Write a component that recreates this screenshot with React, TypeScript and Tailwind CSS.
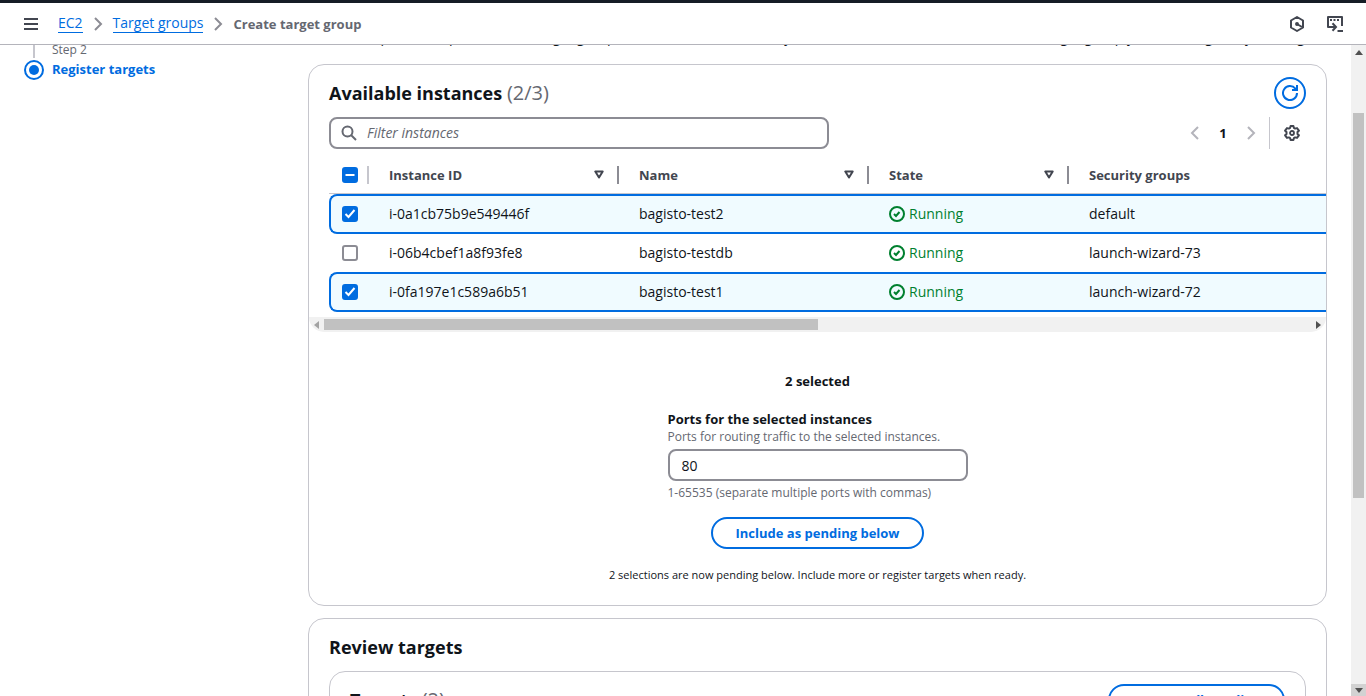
import { useEffect, useRef, type ReactNode } from "react";

type Instance = { id: string; name: string; state: string; group: string; selected: boolean };

const instances: Instance[] = [
  { id: "i-0a1cb75b9e549446f", name: "bagisto-test2", state: "Running", group: "default", selected: true },
  { id: "i-06b4cbef1a8f93fe8", name: "bagisto-testdb", state: "Running", group: "launch-wizard-73", selected: false },
  { id: "i-0fa197e1c589a6b51", name: "bagisto-test1", state: "Running", group: "launch-wizard-72", selected: true },
];

function Icon({ children, className = "" }: { children: ReactNode; className?: string }) {
  return (
    <svg viewBox="0 0 16 16" className={`size-4 shrink-0 ${className}`} fill="none" stroke="currentColor" strokeWidth="2" aria-hidden="true">
      {children}
    </svg>
  );
}

function Checkbox({ label, checked = false, indeterminate = false }: { label: string; checked?: boolean; indeterminate?: boolean }) {
  const ref = useRef<HTMLInputElement>(null);
  useEffect(() => {
    if (ref.current) ref.current.indeterminate = indeterminate;
  }, [indeterminate]);
  return (
    <span className="relative block size-4">
      <input
        ref={ref}
        type="checkbox"
        aria-label={label}
        defaultChecked={checked}
        className="peer block size-4 appearance-none rounded-[3px] border-2 border-[#8c8c94] bg-white checked:border-[#006ce0] checked:bg-[#006ce0] indeterminate:border-[#006ce0] indeterminate:bg-[#006ce0]"
      />
      <svg
        viewBox="0 0 16 16"
        className="pointer-events-none absolute inset-0 hidden size-4 peer-checked:block peer-indeterminate:block"
        fill="none"
        stroke="#fff"
        strokeWidth="2"
        aria-hidden="true"
      >
        {indeterminate ? <path d="M3.5 8h9" /> : <path d="m3.5 8 3 3 6-7" />}
      </svg>
    </span>
  );
}

function ColumnHeader({ title, sortable = true }: { title: string; sortable?: boolean }) {
  return (
    <th scope="col" className="border-b border-[#c6c6cd] p-0 text-left">
      <div className="flex h-[37px] items-center justify-between pl-5">
        <span className="text-[13px] leading-5 font-bold text-[#424650]">{title}</span>
        {sortable && (
          <button type="button" aria-label={`Sort by ${title}`} className="flex items-center gap-[13px] text-[#424650]">
            <svg viewBox="0 0 10 9" className="h-[9px] w-[10px]" fill="none" stroke="currentColor" strokeWidth="2" strokeLinejoin="round" aria-hidden="true">
              <path d="M1.3 1.5h7.4L5 7.500z" />
            </svg>
            <span className="h-[18px] w-[2px] bg-[#8c8c94]" />
          </button>
        )}
      </div>
    </th>
  );
}

function InstanceRow({ item }: { item: Instance }) {
  const cell = item.selected ? "border-y-2 border-[#006ce0] bg-[#f0fbff] h-10" : "h-[38px]";
  const first = item.selected ? "rounded-l-lg border-l-2 pl-[11px]" : "pl-[13px]";
  return (
    <tr className="text-[14px] leading-5 text-[#0f141a]">
      <td className={`py-0 ${cell} ${first}`}>
        <Checkbox label={`Select ${item.name}`} checked={item.selected} />
      </td>
      <td className={`py-0 pl-5 ${cell}`}>{item.id}</td>
      <td className={`py-0 pl-5 ${cell}`}>{item.name}</td>
      <td className={`py-0 pl-5 ${cell}`}>
        <span className="flex items-center gap-1 text-[#00802f]">
          <Icon>
            <circle cx="8" cy="8" r="7" />
            <path d="m5 8 2 2 3.5-4" />
          </Icon>
          {item.state}
        </span>
      </td>
      <td className={`py-0 pl-5 ${cell}`}>{item.group}</td>
    </tr>
  );
}

function TopBar() {
  return (
    <header className="shrink-0 border-t-3 border-b border-t-[#161d26] border-b-[#b4b4bb] bg-white">
      <div className="flex h-[41px] items-center justify-between pr-[22px] pl-6">
        <div className="flex items-center">
          <button type="button" aria-label="Open navigation" className="text-[#424650]">
            <svg viewBox="0 0 14 12" className="h-3 w-[14px]" fill="none" stroke="currentColor" strokeWidth="2" aria-hidden="true">
              <path d="M0 1h14M0 6h14M0 11h14" />
            </svg>
          </button>
          <nav aria-label="Breadcrumbs" className="ml-5 text-[14px] leading-5">
            <ol className="flex items-center gap-[7px]">
              <li className="flex items-center gap-[7px]">
                <a href="#ec2" className="border-b border-[#006ce0] leading-[18px] text-[#006ce0]">EC2</a>
                <Icon className="text-[#8c8c94]">
                  <path d="m5 2 6 6-6 6" />
                </Icon>
              </li>
              <li className="flex items-center gap-[7px]">
                <a href="#target-groups" className="border-b border-[#006ce0] leading-[18px] text-[#006ce0]">Target groups</a>
                <Icon className="text-[#8c8c94]">
                  <path d="m5 2 6 6-6 6" />
                </Icon>
              </li>
              <li className="text-[13px] font-bold text-[#656871]" aria-current="page">Create target group</li>
            </ol>
          </nav>
        </div>
        <div className="flex items-center gap-[21px] text-[#424650]">
          <button type="button" aria-label="Amazon Q">
            <Icon>
              <path d="M8 1 14 4.5v7L8 15l-6-3.500v-7z" strokeLinejoin="round" />
              <path d="m8 8 5 3" />
              <circle cx="8" cy="8" r="1.200" fill="currentColor" strokeWidth="1.500" />
            </Icon>
          </button>
          <button type="button" aria-label="CloudShell">
            <svg viewBox="0 0 18 16" className="h-4 w-[18px]" fill="none" stroke="currentColor" strokeWidth="2" aria-hidden="true">
              <path d="M4 11H2V1h14v9" strokeLinejoin="round" />
              <path d="M4 4h2M7.500 4h2M11 4h2" strokeWidth="1.800" />
              <path d="M4 11h5.500M6.500 7.300 10 11l-3.500 3.700" />
              <path d="M11.500 15H17" />
            </svg>
          </button>
        </div>
      </div>
    </header>
  );
}

function Steps() {
  return (
    <aside className="w-[308px] shrink-0 pl-6">
      <ol aria-label="Steps">
        <li className="flex gap-2">
          <div className="flex w-5 flex-col items-center">
            <span className="h-[13px] w-[2px] bg-[#c6c6cd]" />
            <svg viewBox="0 0 20 20" className="mt-[2px] size-5 shrink-0 text-[#006ce0]" aria-hidden="true">
              <circle cx="10" cy="10" r="9" fill="none" stroke="currentColor" strokeWidth="2" />
              <circle cx="10" cy="10" r="5" fill="currentColor" />
            </svg>
          </div>
          <div className="-mt-[3px]">
            <p className="text-[12px] leading-4 text-[#656871]">Step 2</p>
            <p className="mt-px text-[13px] leading-5 font-bold text-[#006ce0]">Register targets</p>
          </div>
        </li>
      </ol>
    </aside>
  );
}

function AvailableInstances() {
  return (
    <section className="overflow-hidden rounded-2xl border border-[#c6c6cd] bg-white">
      <div className="flex items-center justify-between px-5 pt-3">
        <h2 className="text-[18px] leading-6 font-bold text-[#0f141a]">
          Available instances <span className="text-[20px] font-normal text-[#656871]">(2/3)</span>
        </h2>
        <button type="button" aria-label="Refresh" className="flex size-8 items-center justify-center rounded-full border-2 border-[#006ce0] text-[#006ce0]">
          <Icon>
            <path d="M10 5h5V0" />
            <path d="M15 8a7 7 0 1 1-1.600-4.400L15 5" />
          </Icon>
        </button>
      </div>

      <div className="mt-2 flex items-center justify-between px-5">
        <label className="flex h-8 w-[500px] items-center gap-[10px] rounded-lg border-2 border-[#8c8c94] pl-[10px] text-[#656871]">
          <Icon>
            <circle cx="6.500" cy="6.500" r="5" />
            <path d="m10 10 5 5" />
          </Icon>
          <input
            type="search"
            aria-label="Filter instances"
            placeholder="Filter instances"
            className="min-w-0 flex-1 bg-transparent text-[14px] leading-5 outline-none placeholder:text-[#656871] placeholder:italic"
          />
        </label>
        <div className="flex items-center">
          <button type="button" aria-label="Previous page" className="text-[#b4b4bb]">
            <Icon>
              <path d="M11 2 5 8l6 6" />
            </Icon>
          </button>
          <button type="button" aria-label="Page 1" className="w-10 text-center text-[13px] leading-5 font-bold text-[#0f141a]">1</button>
          <button type="button" aria-label="Next page" className="text-[#b4b4bb]">
            <Icon>
              <path d="m5 2 6 6-6 6" />
            </Icon>
          </button>
          <span className="ml-[10px] h-8 w-px bg-[#c6c6cd]" />
          <button type="button" aria-label="Preferences" className="mr-[6px] ml-[14px] text-[#424650]">
            <Icon>
              <path
                d="M6.600 1h2.800l.5 1.900 1.200.7 1.900-.5 1.900 2.600L13.500 7v2l1.400 1.300-1.900 2.600-1.900-.5-1.200.7-.5 1.900H6.600l-.5-1.900-1.200-.7-1.900.5-1.900-2.600L2.500 9V7L1.100 5.700 3 3.100l1.900.5 1.200-.7z"
                strokeLinejoin="round"
                strokeWidth="2"
              />
              <circle cx="8" cy="8" r="2" strokeWidth="1.800" />
            </Icon>
          </button>
        </div>
      </div>

      <div className="mt-[7px] overflow-hidden pl-5">
        <table className="w-full table-fixed border-separate border-spacing-0">
          <colgroup>
            <col className="w-10" />
            <col className="w-[250px]" />
            <col className="w-[250px]" />
            <col className="w-[200px]" />
            <col />
          </colgroup>
          <thead>
            <tr>
              <th scope="col" className="border-b border-[#c6c6cd] p-0">
                <div className="flex h-[37px] items-center justify-between pl-[13px]">
                  <Checkbox label="Select all instances" indeterminate />
                  <span className="h-[18px] w-[2px] bg-[#c6c6cd]" />
                </div>
              </th>
              <ColumnHeader title="Instance ID" />
              <ColumnHeader title="Name" />
              <ColumnHeader title="State" />
              <ColumnHeader title="Security groups" sortable={false} />
            </tr>
          </thead>
          <tbody>
            {instances.map((item) => (
              <InstanceRow key={item.id} item={item} />
            ))}
          </tbody>
        </table>
      </div>

      <div className="mt-[5px] flex h-[15px] items-center justify-between rounded-b-2xl bg-[#f1f1f1] px-[5px]" aria-hidden="true">
        <svg viewBox="0 0 5 8" className="h-2 w-[5px]">
          <path d="M5 0v8L0 4z" fill="#a3a3a3" />
        </svg>
        <div className="mx-[5px] flex-1">
          <div className="h-[11px] w-1/2 bg-[#c1c1c1]" />
        </div>
        <svg viewBox="0 0 5 8" className="h-2 w-[5px]">
          <path d="M0 0v8l5-4z" fill="#505050" />
        </svg>
      </div>

      <div className="flex flex-col items-center pt-[39px] pb-[22px] text-[#0f141a]">
        <p className="text-[13px] leading-5 font-bold">2 selected</p>
        <div className="mt-[18px] flex w-[300px] flex-col">
          <label htmlFor="ports" className="text-[13px] leading-5 font-bold">Ports for the selected instances</label>
          <p className="text-[12px] leading-4 text-[#656871]">Ports for routing traffic to the selected instances.</p>
          <input
            id="ports"
            type="text"
            defaultValue="80"
            className="mt-1 h-8 w-full rounded-lg border-2 border-[#8c8c94] px-3 text-[14px] leading-5 outline-none"
          />
          <p className="mt-1 text-[12px] leading-4 text-[#656871]">1-65535 (separate multiple ports with commas)</p>
        </div>
        <button type="button" className="mt-4 h-8 rounded-full border-2 border-[#006ce0] px-[23px] text-[13px] leading-5 font-bold text-[#006ce0]">
          Include as pending below
        </button>
        <p className="mt-[18px] text-[11px] leading-4">2 selections are now pending below. Include more or register targets when ready.</p>
      </div>
    </section>
  );
}

function ReviewTargets() {
  return (
    <section className="rounded-2xl border border-[#c6c6cd] bg-white px-5 pt-4 pb-5">
      <h2 className="text-[18px] leading-6 font-bold text-[#0f141a]">Review targets</h2>
      <div className="mt-3 rounded-2xl border border-[#c6c6cd] px-5 pt-3 pb-10">
        <div className="flex items-center justify-between">
          <h3 className="text-[18px] leading-6 font-bold text-[#0f141a]">
            Targets <span className="text-[20px] font-normal text-[#656871]">(2)</span>
          </h3>
          <button type="button" className="h-8 rounded-full border-2 border-[#006ce0] px-[23px] text-[13px] leading-5 font-bold text-[#006ce0]">
            Remove all pending
          </button>
        </div>
      </div>
    </section>
  );
}

function PageScrollbar() {
  return (
    <div className="flex w-[15px] shrink-0 flex-col items-center bg-[#f1f1f1]" aria-hidden="true">
      <div className="flex h-[15px] items-center">
        <svg viewBox="0 0 8 5" className="h-[5px] w-2">
          <path d="M0 5h8L4 0z" fill="#505050" />
        </svg>
      </div>
      <div className="flex w-full flex-1 flex-col items-center">
        <div className="h-[8.500%]" />
        <div className="h-[61.700%] w-[11px] bg-[#c1c1c1]" />
      </div>
      <div className="flex h-3 w-full items-center justify-center bg-[#d2d2d2]">
        <svg viewBox="0 0 8 5" className="h-[5px] w-2">
          <path d="M0 0h8L4 5z" fill="#505050" />
        </svg>
      </div>
    </div>
  );
}

export default function App() {
  return (
    <div className="flex h-screen flex-col overflow-hidden bg-white font-['Open_Sans','Noto_Sans',sans-serif]">
      <TopBar />
      <div className="flex min-h-0 flex-1">
        <div className="flex min-w-0 flex-1 overflow-hidden">
          <Steps />
          <main className="flex min-w-0 flex-1 flex-col pr-6">
            <p className="-mt-[18px] h-5 shrink-0 text-[14px] leading-5 whitespace-nowrap text-[#0f141a]">
              This is an optional step to create a target group. However, to ensure that your load balancer routes traffic to this target group you must register your targets.
            </p>
            <div className="mt-[17px] flex flex-col gap-3">
              <AvailableInstances />
              <ReviewTargets />
            </div>
          </main>
        </div>
        <PageScrollbar />
      </div>
    </div>
  );
}
